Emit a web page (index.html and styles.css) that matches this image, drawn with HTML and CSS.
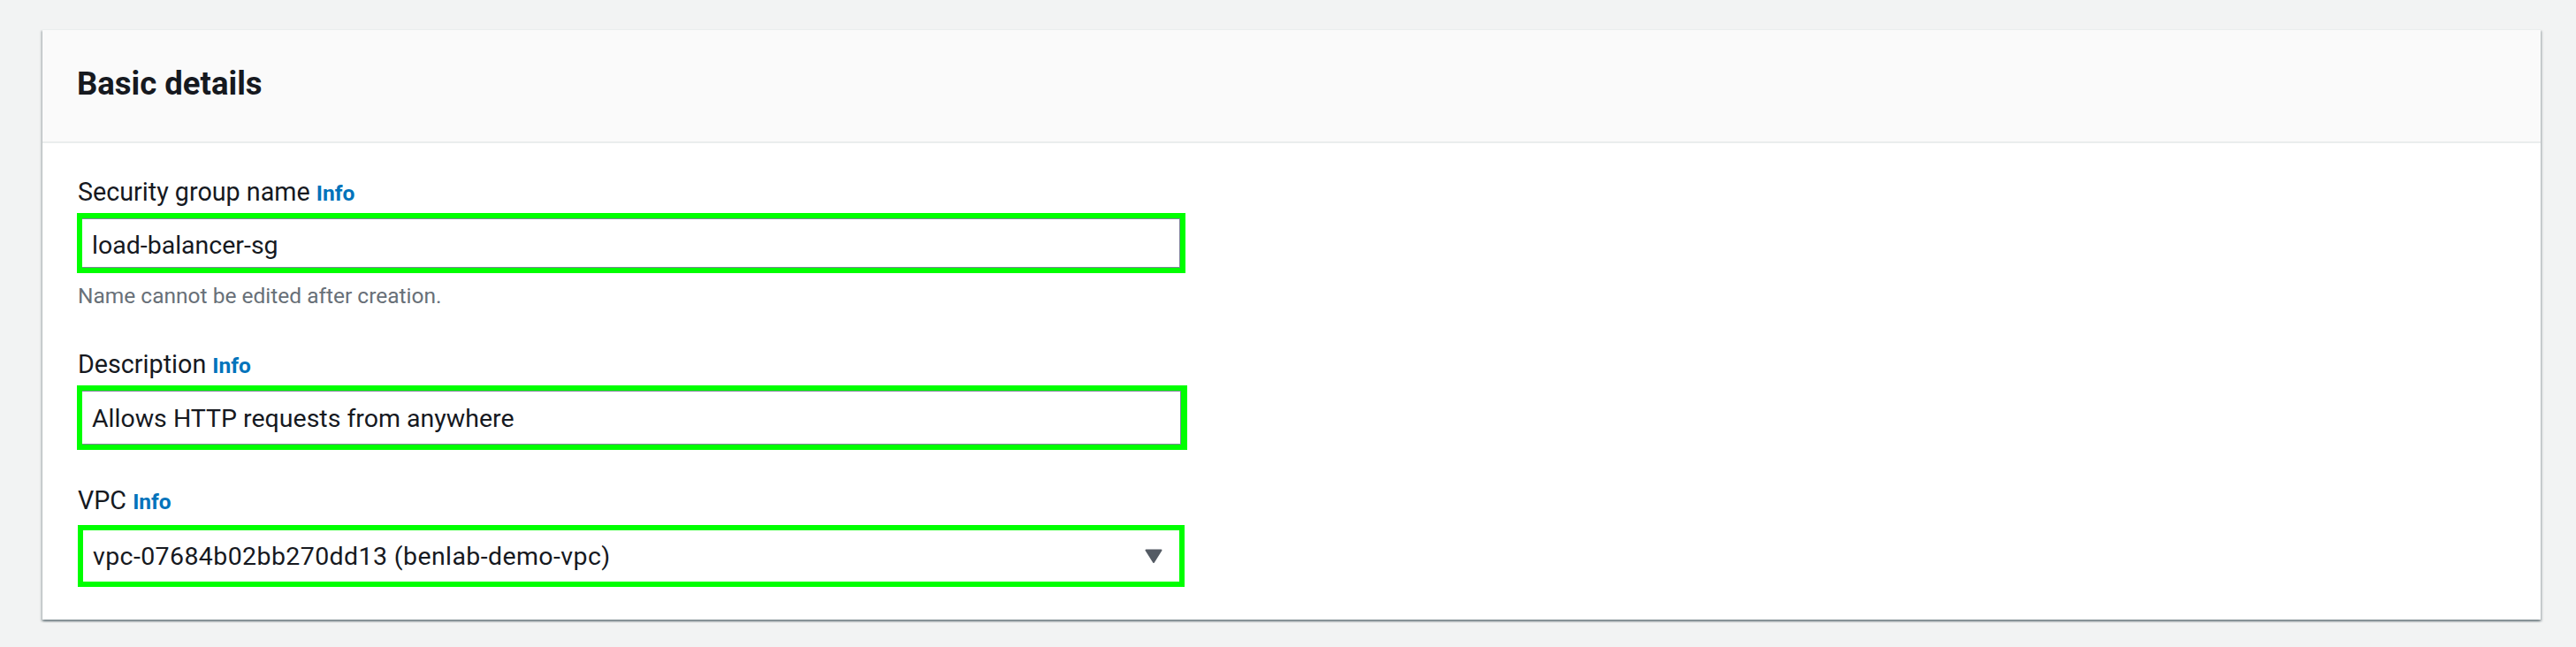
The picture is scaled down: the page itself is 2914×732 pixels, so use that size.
FILE: index.html
```html
<!DOCTYPE html>
<html lang="en">
<head>
<meta charset="utf-8">
<title>Basic details</title>
<link rel="stylesheet" href="styles.css">
</head>
<body>
<div class="page">
  <section class="card">
    <header class="card-header">
      <h2 class="title">Basic details</h2>
    </header>
    <div class="card-body">
      <div class="field field-name">
        <label class="label">Security group name <a class="info">Info</a></label>
        <div class="hl hl-name">
          <div class="input input-name">load-balancer-sg</div>
        </div>
        <div class="hint">Name cannot be edited after creation.</div>
      </div>
      <div class="field field-desc">
        <label class="label">Description <a class="info">Info</a></label>
        <div class="hl hl-desc">
          <div class="input input-desc">Allows HTTP requests from anywhere</div>
        </div>
      </div>
      <div class="field field-vpc">
        <label class="label label-vpc">VPC <a class="info">Info</a></label>
        <div class="hl hl-vpc">
          <div class="select">
            <span class="select-value">vpc-07684b02bb270dd13 (benlab-demo-vpc)</span>
            <svg class="caret" width="20" height="16" viewBox="0 0 20 16"><path d="M1.5 1.5 L18.5 1.5 L10 15 Z" fill="#545b64" stroke="#545b64" stroke-width="2" stroke-linejoin="round"/></svg>
          </div>
        </div>
      </div>
    </div>
  </section>
</div>
</body>
</html>
```

FILE: styles.css
```css
* { box-sizing: border-box; }
html, body { margin: 0; padding: 0; }
body {
  background: #f2f3f3;
  font-family: Roboto, "Liberation Sans", Arial, sans-serif;
  color: #16191f;
  width: 2914px;
  height: 732px;
  overflow: hidden;
}
.page {
  padding: 33px 40px 0 48px;
}
.card {
  background: #ffffff;
  border-top: 1px solid #eaeded;
  box-shadow: 0 2px 2px 0 rgba(0, 28, 36, 0.35), 2px 2px 2px 0 rgba(0, 28, 36, 0.15), -2px 2px 2px 0 rgba(0, 28, 36, 0.15);
}
.card-header {
  background: #fafafa;
  border-bottom: 2px solid #eaeded;
  padding: 39px 39px 43px 39px;
}
.title {
  margin: 0;
  font-size: 36.5px;
  line-height: 44px;
  font-weight: 700;
  color: #16191f;
}
.card-body {
  padding: 35px 39px 37px 39px;
  display: flex;
  flex-direction: column;
}
.field {
  display: flex;
  flex-direction: column;
  align-items: flex-start;
}
.field-desc { margin-top: 41px; }
.field-vpc { margin-top: 37px; }
.label {
  display: block;
  height: 40px;
  font-size: 28.7px;
  line-height: 40px;
  color: #16191f;
  margin-bottom: 4px;
  padding-left: 1px;
}
.label-vpc { margin-bottom: 8px; }
.info {
  font-size: 24.5px;
  line-height: 1;
  font-weight: 700;
  color: #0073bb;
}
.hl {
  border: 6px solid #00ff00;
  background: #ffffff;
}
.hl-name { width: 1254px; height: 68px; }
.hl-desc { width: 1256px; height: 73px; border-right-width: 7px; }
.hl-vpc { width: 1252px; height: 70px; margin-left: 1px; }
.input {
  height: 100%;
  border-top: 1px solid #7d8598;
  border-right: 1px solid #7d8598;
  border-bottom: 1px solid #7d8598;
  font-size: 28.5px;
  line-height: 40px;
  padding: 10px 0 0 11px;
  color: #16191f;
  white-space: nowrap;
}
.input-desc { padding-top: 11px; }
.select {
  height: 100%;
  display: flex;
  align-items: center;
  justify-content: space-between;
  padding: 0 19px 0 11px;
}
.select-value {
  font-size: 28.5px;
  line-height: 40px;
  letter-spacing: 0.4px;
  color: #16191f;
  white-space: nowrap;
  padding-top: 2px;
}
.caret { display: block; }
.hint {
  margin-top: 10px;
  font-size: 24.5px;
  line-height: 32px;
  color: #687078;
  padding-left: 1px;
}
```
